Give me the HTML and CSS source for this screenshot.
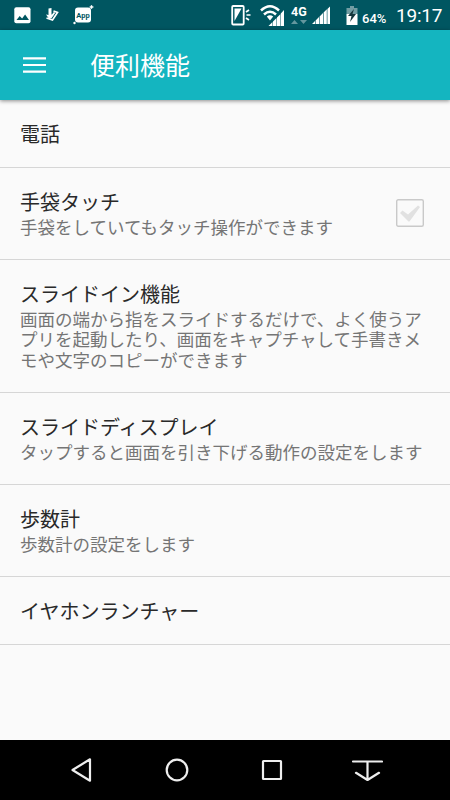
FILE: index.html
```html
<!DOCTYPE html>
<html lang="ja">
<head>
<meta charset="utf-8">
<title>便利機能</title>
<link rel="stylesheet" href="styles.css">
</head>
<body>
<div class="status">
  <div class="notifications">
    <svg width="17" height="17" viewBox="0 0 17 17"><rect x=".3" y=".3" width="16.2" height="16" rx="2" fill="#fff"/><path d="M2.5 13l3.200-4 2.400 2.600 3-4L15 13z" fill="#005661"/></svg>
    <svg width="14" height="16" viewBox="0 0 14 16"><path d="M3.500 1.500L6.500 1v6.500l2 .5-4 4.500L1 7.500l2.500.5z" fill="#fff"/><path d="M8.500 4L12.500 5.500 7.500 13 1.500 11M5.500 11l4-5.500" fill="none" stroke="#fff" stroke-width="1.700"/></svg>
    <svg width="21" height="20" viewBox="0 0 21 20"><rect x="2" y="2.500" width="16" height="15" rx="3" fill="#fff"/><path d="M18.500 0l.7 1.300 1.300.7-1.300.7-.7 1.300-.7-1.300-1.300-.7 1.300-.7z" fill="#fff" stroke="#fff" stroke-width=".5"/><circle cx="1.500" cy="18" r="1.200" fill="#fff"/><text x="10" y="12.500" class="app-label">App</text></svg>
  </div>
  <div class="system">
    <svg width="21" height="21" viewBox="0 0 21 21" fill="none" stroke="#fff"><rect x="1.200" y="1" width="11.500" height="18.500" rx="1" stroke-width="1.800"/><path d="M3.500 3.500h7L3.500 16z" fill="#fff" stroke="none"/><path d="M15 7l3-2M15.500 10h4M15 13l3 2" stroke-width="1.700"/></svg>
    <svg class="wifi" width="25" height="24" viewBox="0 0 25 24"><path d="M1 7.500Q10-1 19 7.500M4 11.500q6-5.500 12 0" fill="none" stroke="#fff" stroke-width="2.500"/><path d="M6.800 13.500q3.200-2.500 6.400 0L10 17.500zM8.500 23l4-4v4zM13 18.500l3.500-3.500v8H13zM17 14.500l3.300-3.300V23H17zM20.800 10.500l3.200-3.500v16h-3.200z" fill="#fff"/></svg>
    <div class="network"><span>4G</span><svg width="16" height="6" viewBox="0 0 16 6" fill="#64979e"><path d="M0 5l3.500-4L7 5zM9 1h7l-3.500 4z"/></svg></div>
    <svg class="signal" width="19" height="19" viewBox="0 0 19 19" fill="#fff"><path d="M0 18l3-3v3zM3.600 14.500L7 11v7H3.600zM7.600 10.500L11 7v11H7.600zM11.600 6.500L14.800 3.200V18h-3.200zM15.400 3L18 .5V18h-2.600z"/></svg>
    <svg class="battery" width="12" height="20" viewBox="0 0 12 20"><path d="M4 0h4v2h3.500v6H.5V2H4z" fill="#719da3"/><path d="M.5 8h11v11H.5z" fill="#fff"/><path d="M8 3L2 10h3.500L4 16l6-8H6.500z" fill="#15363b"/></svg>
    <span class="percent">64%</span>
    <span class="clock">19:17</span>
  </div>
</div>
<header class="toolbar">
  <svg width="24" height="18" viewBox="0 0 24 18" fill="#fff"><path d="M0 1.300h23v2.200H0zM0 7.900h23v2.200H0zM0 14.500h23v2.200H0z"/></svg>
  <h1>便利機能</h1>
</header>
<main>
  <section class="row short"><h2>電話</h2></section>
  <section class="row">
    <div><h2>手袋タッチ</h2><p>手袋をしていてもタッチ操作ができます</p></div>
    <svg class="check" width="28" height="28" viewBox="0 0 28 28"><rect x=".7" y=".7" width="26.600" height="26.600" rx="1.500" fill="none" stroke="#c9c9c9" stroke-width="1.400"/><path d="M4 14l2.500-2.500 5.500 4L22 6.500l2 1.500-10.500 14.500h-1z" fill="#e1e1e1"/></svg>
  </section>
  <section class="row tall"><div><h2>スライドイン機能</h2><p>画面の端から指をスライドするだけで、よく使うア<br>プリを起動したり、画面をキャプチャして手書きメ<br>モや文字のコピーができます</p></div></section>
  <section class="row"><div><h2>スライドディスプレイ</h2><p>タップすると画面を引き下げる動作の設定をします</p></div></section>
  <section class="row"><div><h2>歩数計</h2><p>歩数計の設定をします</p></div></section>
  <section class="row short"><h2>イヤホンランチャー</h2></section>
</main>
<nav class="navbar">
  <svg viewBox="0 0 32 32"><path d="M6.500 16L24 5.300v21.400z"/></svg>
  <svg viewBox="0 0 32 32"><circle cx="16" cy="16" r="10.300"/></svg>
  <svg viewBox="0 0 32 32"><rect x="7" y="7" width="18" height="18" rx=".5"/></svg>
  <svg viewBox="0 0 32 32" stroke-linecap="round"><path d="M2 7.500h29M16.500 7.500v18M5 18.800L16.500 26 28 18.800"/></svg>
</nav>
</body>
</html>
```
FILE: styles.css
```css
* { box-sizing: border-box; }
body {
  margin: 0;
  width: 450px;
  height: 800px;
  display: flex;
  flex-direction: column;
  overflow: hidden;
  background: #fafafa;
  color: #292929;
  font-family: "Noto Sans CJK JP", sans-serif;
}
h1, h2, p { margin: 0; font-weight: 400; white-space: nowrap; }
svg { display: block; flex: none; }
.status {
  height: 30px;
  flex: none;
  display: flex;
  align-items: center;
  justify-content: space-between;
  padding: 0 10px 0 14px;
  background: #005661;
  color: #fff;
  font-family: Roboto, sans-serif;
}
.notifications { display: flex; align-items: center; gap: 14px; }
.app-label { font: bold 7.500px Roboto, sans-serif; fill: #005661; text-anchor: middle; }
.system { display: flex; align-items: center; height: 30px; }
.wifi { margin-left: 8px; }
.network { margin-left: 6px; width: 16px; display: flex; flex-direction: column; gap: 1px; }
.network span { font-size: 12.500px; line-height: 12px; font-weight: 700; }
.signal { margin-left: 5px; }
.battery { margin: 2px 0 0 15px; }
.percent { margin-left: 4px; width: 25px; font-size: 13px; line-height: 16px; padding-top: 7px; font-weight: 500; }
.clock { margin-left: 9px; width: 44px; font-size: 19px; line-height: 22px; padding-top: 2px; letter-spacing: -.2px; }
.toolbar {
  height: 70px;
  flex: none;
  display: flex;
  align-items: center;
  gap: 43px;
  padding-left: 23px;
  background: #14b5c0;
  color: #fff;
  box-shadow: 0 1px 4px rgba(0, 0, 0, .45);
  z-index: 1;
}
.toolbar h1 { font-size: 25px; line-height: 36px; padding-bottom: 2px; }
main { flex: 1; }
.row {
  height: 92px;
  display: flex;
  align-items: center;
  justify-content: space-between;
  padding: 0 26px 2px 20px;
  border-bottom: 1px solid #d6d6d6;
}
.row.short { height: 68px; padding-bottom: 0; }
.row.tall { height: 133px; }
.row h2 { font-size: 20px; line-height: 29px; }
.row div h2 { line-height: 27px; padding-bottom: 2px; }
.row p { font-size: 17.500px; line-height: 20.500px; color: #757575; }
.check { margin-top: 1px; }
.navbar {
  height: 60px;
  flex: none;
  display: flex;
  align-items: center;
  justify-content: center;
  gap: 63px;
  padding-right: 1px;
  background: #000;
}
.navbar svg { width: 32px; height: 32px; fill: none; stroke: #eee; stroke-width: 2.200; stroke-linejoin: round; }
```
